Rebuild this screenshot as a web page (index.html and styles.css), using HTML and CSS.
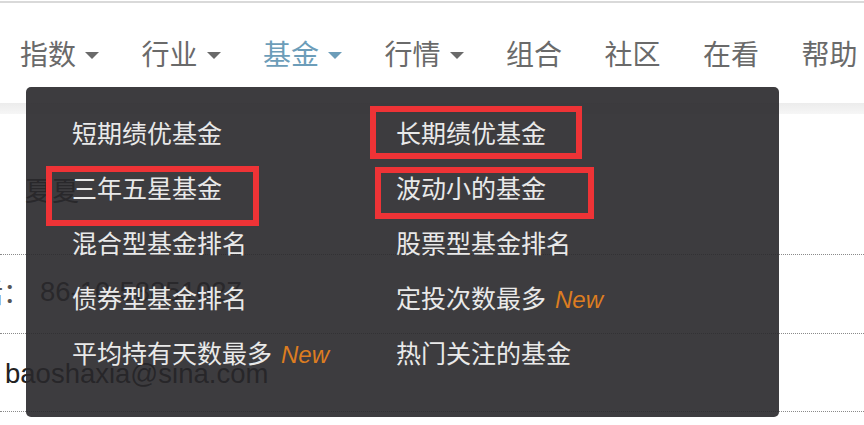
FILE: index.html
```html
<!DOCTYPE html>
<html lang="zh-CN">
<head>
<meta charset="utf-8">
<title>基金</title>
<link rel="stylesheet" href="styles.css">
</head>
<body>
<div class="topline"></div>
<nav class="nav">
  <a class="nav-item">指数<span class="caret"></span></a>
  <a class="nav-item">行业<span class="caret"></span></a>
  <a class="nav-item active">基金<span class="caret"></span></a>
  <a class="nav-item">行情<span class="caret"></span></a>
  <a class="nav-item">组合</a>
  <a class="nav-item">社区</a>
  <a class="nav-item">在看</a>
  <a class="nav-item">帮助</a>
</nav>
<div class="strip"></div>
<main class="profile">
  <div class="row row-name"><span class="name">夏夏</span></div>
  <div class="row row-phone"><span class="label"><span class="label-text">电话：</span></span><span class="value">86-10-58851027</span></div>
  <div class="row row-email"><span class="value email">baoshaxia@sina.com</span></div>
</main>
<div class="dropdown">
  <a class="dd-item">短期绩优基金</a>
  <a class="dd-item">长期绩优基金</a>
  <a class="dd-item">三年五星基金</a>
  <a class="dd-item">波动小的基金</a>
  <a class="dd-item">混合型基金排名</a>
  <a class="dd-item">股票型基金排名</a>
  <a class="dd-item">债券型基金排名</a>
  <a class="dd-item">定投次数最多<em class="new">New</em></a>
  <a class="dd-item">平均持有天数最多<em class="new">New</em></a>
  <a class="dd-item">热门关注的基金</a>
</div>
<div class="mark mark-1"></div>
<div class="mark mark-2"></div>
<div class="mark mark-3"></div>
</body>
</html>
```
FILE: styles.css
```css
html, body {
  margin: 0;
  padding: 0;
  background: #ffffff;
  width: 864px;
  height: 425px;
  overflow: hidden;
  font-family: "Noto Sans CJK SC", "Liberation Sans", sans-serif;
}

.topline {
  margin-top: 1px;
  height: 2px;
  background: #d9d9d9;
}

.nav {
  display: flex;
  align-items: center;
  height: 100px;
  padding-left: 20px;
  gap: 42.5px;
  white-space: nowrap;
}

.nav-item {
  display: flex;
  align-items: center;
  font-size: 28px;
  line-height: 40px;
  color: #6a6a6a;
}

.nav-item.active {
  color: #6c9db9;
}

.caret {
  display: inline-block;
  margin-left: 9px;
  margin-top: 4px;
  width: 0;
  height: 0;
  border-left: 7px solid transparent;
  border-right: 7px solid transparent;
  border-top: 7px solid currentColor;
}

.strip {
  height: 11px;
  background: linear-gradient(#ececec, #f6f6f6);
}

.profile {
  font-family: "Liberation Sans", "Noto Sans CJK SC", sans-serif;
}

.row {
  display: flex;
  align-items: center;
  line-height: 40px;
  border-bottom: 1px dotted #8a8a8a;
  white-space: nowrap;
}

.row-name {
  padding: 56px 0 44px 25px;
}

.name {
  font-family: "Noto Sans CJK SC", sans-serif;
  font-size: 27px;
  color: #333333;
}

.row-phone {
  padding: 17px 0 21px 0;
}

.label {
  display: flex;
  justify-content: flex-end;
  width: 30px;
  overflow: hidden;
  font-family: "Noto Sans CJK SC", sans-serif;
  font-size: 27px;
  color: #555555;
}

.label-text {
  flex-shrink: 0;
}

.value {
  font-size: 27.5px;
  color: #333333;
  margin-left: 10px;
}

.row-email {
  padding: 20px 0 17px 5px;
}

.value.email {
  margin-left: 0;
  color: #222222;
}

.dropdown {
  position: absolute;
  top: 87px;
  left: 26px;
  width: 753px;
  height: 330px;
  box-sizing: border-box;
  padding: 18px 0 0 46px;
  border-radius: 5px;
  background: rgba(40, 39, 42, 0.9);
  display: grid;
  grid-template-columns: 324px 1fr;
  grid-auto-rows: 55px;
  align-content: start;
}

.dd-item {
  font-size: 25px;
  line-height: 55px;
  color: #e9e9e9;
  white-space: nowrap;
}

.new {
  margin-left: 9px;
  font-family: "Liberation Sans", sans-serif;
  font-style: italic;
  font-size: 24px;
  color: #dc7d21;
}

.mark {
  position: absolute;
  box-sizing: border-box;
  border: 6px solid #ee3336;
}

.mark-1 {
  left: 46px;
  top: 166px;
  width: 213px;
  height: 60px;
}

.mark-2 {
  left: 370px;
  top: 106px;
  width: 212px;
  height: 53px;
}

.mark-3 {
  left: 375px;
  top: 167px;
  width: 219px;
  height: 52px;
}
```
